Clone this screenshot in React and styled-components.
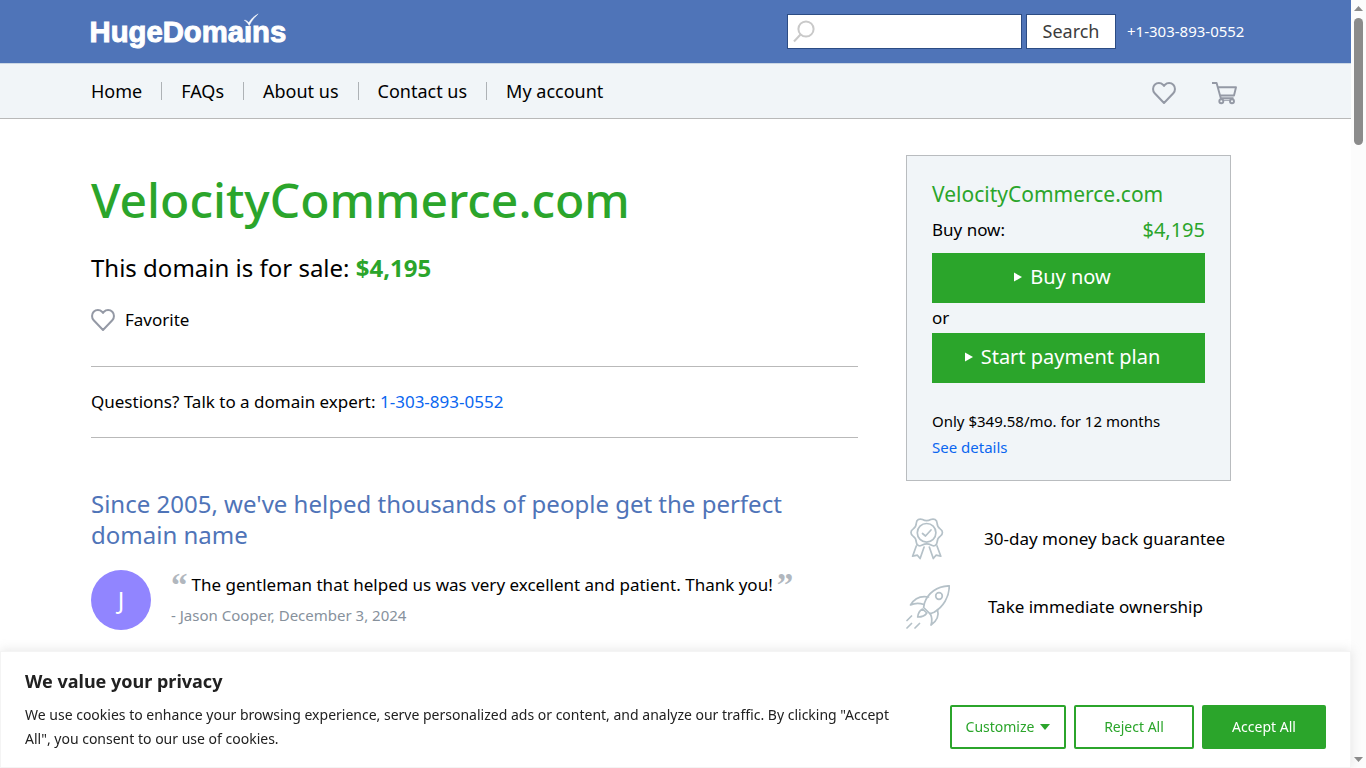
import styled, { createGlobalStyle } from "styled-components";

const GlobalStyle = createGlobalStyle`
  *, *::before, *::after {
    box-sizing: border-box;
  }

  body {
    margin: 0;
    background-color: #fff;
    color: #000;
    font-family: "Noto Sans", sans-serif;
    font-size: 17px;
    line-height: 24px;
  }

  h1, h2, p, ul, blockquote {
    margin: 0;
    padding: 0;
    font-weight: 400;
  }

  a {
    color: inherit;
    text-decoration: none;
  }

  button, input {
    font-family: inherit;
    cursor: pointer;
  }

  svg {
    display: block;
    flex-shrink: 0;
  }
`;

const navLinks = ["Home", "FAQs", "About us", "Contact us", "My account"];

const Shell = styled.div`
  display: grid;
  grid-template-columns: minmax(0, 1fr) 15px;
  min-height: 100vh;
`;

const Container = styled.div`
  width: 100%;
  max-width: 1169px;
  margin: 0 auto;
`;

const TopBar = styled.header`
  background-color: #4f74b8;
  border-bottom: 1px solid #cbd7e4;
`;

const TopBarInner = styled(Container)`
  display: flex;
  align-items: center;
  justify-content: space-between;
  height: 63px;
  padding-right: 11px;
`;

const LogoLink = styled.a`
  margin-left: -2px;
`;

const SearchForm = styled.form`
  display: flex;
  align-items: center;
  gap: 4px;
`;

const SearchField = styled.label`
  display: flex;
  align-items: center;
  width: 235px;
  height: 35px;
  padding-left: 5px;
  background-color: #fff;
  border: 1px solid #2c4c84;
`;

const SearchInput = styled.input`
  flex: 1;
  min-width: 0;
  height: 100%;
  padding: 0 8px;
  border: none;
  outline: none;
  background: none;
  font-size: 16px;
`;

const SearchButton = styled.button`
  width: 90px;
  height: 35px;
  padding: 0 0 2px;
  background-color: #fff;
  border: 1px solid #2c4c84;
  color: #3c3c3c;
  font-size: 18px;
`;

const Phone = styled.a`
  min-width: 122px;
  margin-left: 7px;
  padding-bottom: 2px;
  color: #fff;
  font-size: 15px;
`;

const NavBar = styled.nav`
  background-color: #f1f5f8;
  border-bottom: 1px solid #b9b9b9;
`;

const NavInner = styled(Container)`
  display: flex;
  align-items: center;
  justify-content: space-between;
  height: 54px;
  padding-right: 23px;
`;

const NavList = styled.ul`
  display: flex;
  list-style: none;

  li {
    padding: 0 19px;
    border-right: 1px solid #aeb2b6;
    font-size: 18px;
    line-height: 18px;
  }

  li:first-child {
    padding-left: 0;
  }

  li:last-child {
    border-right: none;
  }
`;

const NavIcons = styled.div`
  display: flex;
  gap: 36px;
  padding-top: 4px;
`;

const Main = styled(Container)`
  display: flex;
  align-items: flex-start;
  justify-content: space-between;
  gap: 48px;
  padding: 36px 29px 140px 0;
`;

const Listing = styled.main`
  flex: 1;
  max-width: 767px;
  padding-top: 15px;
`;

const DomainName = styled.h1`
  color: #2ba52b;
  font-size: 48px;
  font-weight: 500;
  line-height: 60px;
`;

const SaleLine = styled.p`
  margin-top: 22px;
  font-size: 24px;
  line-height: 32px;

  strong {
    color: #2ba52b;
    font-weight: 700;
  }
`;

const FavoriteButton = styled.button`
  display: flex;
  align-items: center;
  gap: 10px;
  margin-top: 24px;
  padding: 0;
  border: none;
  background: none;
  color: #000;
  font-size: 17px;
  line-height: 24px;
`;

const Questions = styled.p`
  margin-top: 34px;
  padding: 23px 0 24px;
  border-top: 1px solid #b9b9b9;
  border-bottom: 1px solid #b9b9b9;
  line-height: 23px;
`;

const TextLink = styled.a`
  color: #0a66f0;
`;

const Tagline = styled.h2`
  margin-top: 50px;
  color: #4f74b8;
  font-size: 24px;
  line-height: 31px;
`;

const Testimonial = styled.div`
  display: flex;
  gap: 20px;
  margin-top: 20px;
`;

const Avatar = styled.div`
  display: flex;
  align-items: center;
  justify-content: center;
  width: 60px;
  height: 60px;
  border-radius: 50%;
  background-color: #9185ff;
  color: #fff;
  font-size: 24px;
`;

const Quote = styled.blockquote`
  display: flex;
  gap: 4px;
  line-height: 30px;
`;

const QuoteMark = styled.span`
  height: 30px;
  color: #b1b7be;
  font-family: "Liberation Serif", serif;
  font-size: 33px;
  font-weight: 700;
  line-height: 30px;
`;

const Author = styled.p`
  margin-top: 3px;
  color: #87919c;
  font-size: 15px;
`;

const Sidebar = styled.aside`
  width: 325px;
  flex-shrink: 0;
`;

const BuyBox = styled.section`
  padding: 24px 25px 20px;
  background-color: #f1f5f8;
  border: 1px solid #b9bcbf;
`;

const BuyTitle = styled.h2`
  color: #2ba52b;
  font-size: 21px;
  line-height: 28px;
`;

const PriceRow = styled.div`
  display: flex;
  align-items: center;
  justify-content: space-between;
  height: 44px;
  margin-bottom: 1px;
`;

const Price = styled.span`
  color: #2ba52b;
  font-size: 20px;
`;

const BuyButton = styled.button`
  display: flex;
  align-items: center;
  justify-content: center;
  gap: 8px;
  width: 100%;
  height: 50px;
  padding: 0 12px 3px 0;
  border: none;
  background-color: #2ba52b;
  color: #fff;
  font-size: 20px;
`;

const Or = styled.p`
  line-height: 30px;
`;

const Plan = styled.p`
  margin-top: 25px;
  font-size: 15px;
  line-height: 26px;
`;

const Features = styled.ul`
  display: grid;
  gap: 24px;
  margin-top: 36px;
  list-style: none;

  li {
    display: flex;
    align-items: center;
    gap: 38px;
    height: 44px;
  }
`;

const CookieBar = styled.section`
  position: fixed;
  left: 0;
  right: 15px;
  bottom: 0;
  padding: 15px 24px 16px;
  background-color: #fff;
  border: 1px solid #f4f4f4;
  box-shadow: 0 -1px 10px rgba(172, 171, 171, 0.3);
  color: #212121;
`;

const CookieTitle = styled.h2`
  font-size: 18px;
  font-weight: 700;
  line-height: 28px;
`;

const CookieBody = styled.div`
  display: flex;
  align-items: center;
  justify-content: space-between;
  gap: 36px;
  margin-top: 8px;

  p {
    flex: 1;
    font-size: 14px;
    line-height: 24px;
  }
`;

const CookieActions = styled.div`
  display: flex;
  gap: 8px;
`;

const CookieButton = styled.button`
  display: flex;
  align-items: center;
  justify-content: center;
  gap: 6px;
  width: ${(props) => props.$width}px;
  height: 44px;
  padding: 0;
  border: 2px solid #2ba52b;
  border-radius: 2px;
  background-color: ${(props) => (props.$filled ? "#2ba52b" : "transparent")};
  color: ${(props) => (props.$filled ? "#fff" : "#2ba52b")};
  font-size: 14px;
  line-height: 24px;
`;

const ScrollTrack = styled.div`
  position: sticky;
  top: 0;
  display: flex;
  flex-direction: column;
  align-items: center;
  height: 100vh;
  padding: 6px 0;
  background-color: #fcfcfc;
`;

const ScrollThumb = styled.div`
  width: 9px;
  height: 127px;
  margin: 7px 0 auto;
  border-radius: 5px;
  background-color: #8b8b8b;
`;

function Logo() {
  return (
    <svg width="206" height="41" viewBox="0 0 210 42" role="img">
      <text
        x="0"
        y="32"
        fill="#fff"
        stroke="#fff"
        strokeWidth="1"
        fontFamily="Liberation Sans, sans-serif"
        fontSize="30"
        fontWeight="700"
      >
        HugeDomains
      </text>
      <path d="M158.500 8h8.500v7.400h-8.500z" fill="#4f74b8" />
      <path
        d="M158.500 9.500c1.800-.4 3.300.8 4.700 2.400 2.600-4 5.300-6.700 9.600-8.900-3.800 3.500-6.600 7-9.200 12-1.600-2.700-3-4.500-5.100-5.500z"
        fill="#fff"
        stroke="#fff"
        strokeWidth="0.4"
      />
    </svg>
  );
}

function SearchIcon() {
  return (
    <svg width="22" height="23" fill="none" stroke="#c9c9c9" strokeWidth="2">
      <circle cx="13" cy="9" r="7.600" />
      <path d="M7.500 14.500 1 21.500" />
    </svg>
  );
}

function HeartIcon() {
  return (
    <svg
      width="24"
      height="24"
      viewBox="0 0 24 24"
      fill="none"
      stroke="#9499a5"
      strokeWidth="2"
      strokeLinejoin="round"
    >
      <path d="M12 22 2.700 12.300C.5 10 .5 6 2.700 3.700 5 1.400 8.800 1.400 11 3.700l1 1.300 1-1.300c2.200-2.300 6-2.300 8.300 0 2.200 2.300 2.200 6.300 0 8.600z" />
    </svg>
  );
}

function CartIcon() {
  return (
    <svg
      width="25"
      height="24"
      viewBox="0 0 25 24"
      fill="none"
      stroke="#9499a5"
      strokeWidth="1.900"
      strokeLinejoin="round"
    >
      <path d="M0 2h4.600l4.200 15.300h12.700M6 6.200h18l-2 8.300H8" />
      <circle cx="9.300" cy="20.300" r="2" />
      <circle cx="20" cy="20.300" r="2" />
      <path d="M11.400 19.300h6.500" strokeWidth="1" />
    </svg>
  );
}

function AwardIcon() {
  return (
    <svg
      width="40"
      height="44"
      viewBox="-1 0 40 44"
      fill="none"
      stroke="#b5c1c8"
      strokeWidth="1.700"
      strokeLinecap="round"
      strokeLinejoin="round"
    >
      <path d="M15.500 2.600c2.500 1.300 5.800 1.300 8.300 0 3-1.500 6.200.2 6.300 3.600.1 2.500 1.200 4.600 3.300 5.900 2.700 1.700 2.700 5.300 0 7-2.100 1.400-3.200 3.400-3.300 6-.1 3.200-3.200 4.600-6 3-2.600-1.500-6.200-1.500-8.800 0-2.800 1.600-5.900.2-6-3-.1-2.600-1.200-4.600-3.300-6-2.700-1.700-2.700-5.300 0-7 2.100-1.300 3.200-3.400 3.300-5.900.1-3.400 3.200-5.100 6.200-3.600z" />
      <circle cx="19.600" cy="15.800" r="9.300" />
      <path d="m15.500 16.500 3 2.500 5.500-6M9.300 29 5.600 39.200l4.800-1 2.700 3.300 4-11.500M30 29l3.800 10.200-4.800-1-2.700 3.300-4-11.500" />
    </svg>
  );
}

function RocketIcon() {
  return (
    <svg
      width="44"
      height="44"
      viewBox="0 0 44 44"
      fill="none"
      stroke="#b5c1c8"
      strokeWidth="1.700"
      strokeLinecap="round"
      strokeLinejoin="round"
    >
      <path d="M43.200.8C31 1.200 22 8 18.500 18l-.9 4.500 6.500 6.300 4-1.500C37 22 43.500 12 43.200.8z" />
      <circle cx="33" cy="11" r="3.300" />
      <path d="M22.500 12C14.500 10.500 8 14 4.500 20c4-2 8.500-2.300 13.500-.5M31.500 24.500c1.500 5.500-.5 11.500-6.500 15.500 1.300-4 1.200-7.500-.8-11.500M16.500 24c-3 1.800-4.500 4.500-4.800 8 3.800 0 7.300-1 9.100-4z" />
      <path d="M1 35.500 5.500 31M1 43l4.500-4.500M9 43l4.500-4.500" />
    </svg>
  );
}

function PlayIcon() {
  return (
    <svg width="8" height="10" fill="#fff">
      <path d="M0 .5v9L8 5z" />
    </svg>
  );
}

function App() {
  return (
    <>
      <GlobalStyle />
      <Shell>
        <div>
          <TopBar>
            <TopBarInner>
              <LogoLink href="#home" aria-label="HugeDomains">
                <Logo />
              </LogoLink>
              <SearchForm onSubmit={(e) => e.preventDefault()}>
                <SearchField>
                  <SearchIcon />
                  <SearchInput type="text" aria-label="Search domains" />
                </SearchField>
                <SearchButton type="submit">Search</SearchButton>
                <Phone href="tel:+13038930552">+1-303-893-0552</Phone>
              </SearchForm>
            </TopBarInner>
          </TopBar>

          <NavBar>
            <NavInner>
              <NavList>
                {navLinks.map((label) => (
                  <li key={label}>
                    <a href="#nav">{label}</a>
                  </li>
                ))}
              </NavList>
              <NavIcons>
                <a href="#favorites" aria-label="Favorites">
                  <HeartIcon />
                </a>
                <a href="#cart" aria-label="Cart">
                  <CartIcon />
                </a>
              </NavIcons>
            </NavInner>
          </NavBar>

          <Main>
            <Listing>
              <DomainName>VelocityCommerce.com</DomainName>
              <SaleLine>
                This domain is for sale: <strong>$4,195</strong>
              </SaleLine>
              <FavoriteButton type="button">
                <HeartIcon />
                Favorite
              </FavoriteButton>
              <Questions>
                Questions? Talk to a domain expert:{" "}
                <TextLink href="tel:13038930552">1-303-893-0552</TextLink>
              </Questions>

              <Tagline>
                Since 2005, we've helped thousands of people get the perfect
                domain name
              </Tagline>
              <Testimonial>
                <Avatar>J</Avatar>
                <div>
                  <Quote>
                    <QuoteMark>“</QuoteMark>
                    <p>
                      The gentleman that helped us was very excellent and
                      patient. Thank you!
                    </p>
                    <QuoteMark>”</QuoteMark>
                  </Quote>
                  <Author>- Jason Cooper, December 3, 2024</Author>
                </div>
              </Testimonial>
            </Listing>

            <Sidebar>
              <BuyBox>
                <BuyTitle>VelocityCommerce.com</BuyTitle>
                <PriceRow>
                  <span>Buy now:</span>
                  <Price>$4,195</Price>
                </PriceRow>
                <BuyButton type="button">
                  <PlayIcon />
                  Buy now
                </BuyButton>
                <Or>or</Or>
                <BuyButton type="button">
                  <PlayIcon />
                  Start payment plan
                </BuyButton>
                <Plan>
                  Only $349.58/mo. for 12 months
                  <br />
                  <TextLink href="#details">See details</TextLink>
                </Plan>
              </BuyBox>
              <Features>
                <li>
                  <AwardIcon />
                  30-day money back guarantee
                </li>
                <li>
                  <RocketIcon />
                  Take immediate ownership
                </li>
              </Features>
            </Sidebar>
          </Main>
        </div>

        <ScrollTrack aria-hidden="true">
          <svg width="9" height="5" fill="#8b8b8b">
            <path d="M0 5h9L4.500 0z" />
          </svg>
          <ScrollThumb />
          <svg width="9" height="5" fill="#8b8b8b">
            <path d="M0 0h9L4.500 5z" />
          </svg>
        </ScrollTrack>
      </Shell>

      <CookieBar aria-label="Cookie consent">
        <CookieTitle>We value your privacy</CookieTitle>
        <CookieBody>
          <p>
            We use cookies to enhance your browsing experience, serve
            personalized ads or content, and analyze our traffic. By clicking
            "Accept All", you consent to our use of cookies.
          </p>
          <CookieActions>
            <CookieButton type="button" $width={116}>
              Customize
              <svg width="10" height="6" fill="#2ba52b">
                <path d="M0 0h10L5 6z" />
              </svg>
            </CookieButton>
            <CookieButton type="button" $width={120}>
              Reject All
            </CookieButton>
            <CookieButton type="button" $width={124} $filled>
              Accept All
            </CookieButton>
          </CookieActions>
        </CookieBody>
      </CookieBar>
    </>
  );
}

export default App;
